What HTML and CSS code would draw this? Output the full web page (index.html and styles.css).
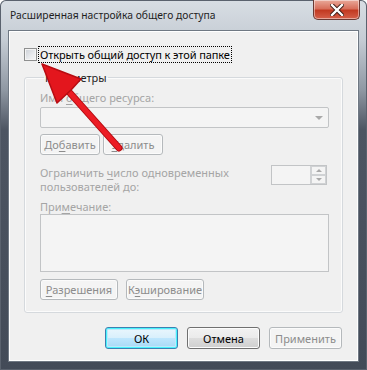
FILE: index.html
```html
<!DOCTYPE html>
<html lang="ru">
<head>
    <meta charset="UTF-8">
    <title>Расширенная настройка общего доступа</title>
    <link rel="stylesheet" href="styles.css">
</head>
<body>
    <div class="window">
        <div class="titlebar">
            <span class="title">Расширенная настройка общего доступа</span>
            <button class="close-btn">
                <svg width="14" height="12" viewBox="0 0 14 12">
                    <path d="M2 1 L12 11 M12 1 L2 11" stroke="#3a1a14" stroke-width="4.2" stroke-linecap="square"/>
                    <path d="M2 1 L12 11 M12 1 L2 11" stroke="#ffffff" stroke-width="2.4" stroke-linecap="square"/>
                </svg>
            </button>
        </div>
        <div class="client">
            <label class="share-row">
                <span class="checkbox"></span>
                <span class="focus-text">Открыть общий доступ к этой папке</span>
            </label>

            <fieldset class="group">
                <legend>Параметры</legend>
                <div class="field-label">Имя <u>о</u>бщего ресурса:</div>
                <div class="combo"><span class="combo-arrow"></span></div>
                <div class="btn-row">
                    <button class="button small" disabled>До<u>б</u>авить</button>
                    <button class="button small" disabled><u>У</u>далить</button>
                </div>
                <div class="limit-row">
                    <div class="field-label two-line">
                        <div>Ограничить <u>ч</u>исло одновременных</div>
                        <div>пользователей до:</div>
                    </div>
                    <div class="spin">
                        <span class="spin-edit"></span>
                        <span class="spin-btns">
                            <span class="spin-up"></span>
                            <span class="spin-down"></span>
                        </span>
                    </div>
                </div>
                <div class="field-label tight">При<u>м</u>ечание:</div>
                <div class="memo"></div>
                <div class="btn-row second">
                    <button class="button wide" disabled><u>Р</u>азрешения</button>
                    <button class="button wide" disabled>К<u>э</u>ширование</button>
                </div>
            </fieldset>

            <div class="dialog-buttons">
                <button class="button dlg default">ОК</button>
                <button class="button dlg normal">Отмена</button>
                <button class="button dlg" disabled>Применить</button>
            </div>
        </div>

        <!-- red pointer drawn over the dialog -->
        <svg class="pointer" width="367" height="370" viewBox="0 0 367 370">
            <path d="M119 148 L70 93" stroke="#b40d12" stroke-width="7" stroke-linecap="round"/>
            <path d="M119 148 L70 93" stroke="#ec1c24" stroke-width="5" stroke-linecap="round"/>
            <path d="M42 64 L81 79 L71 90 L57 103 Z" fill="#e3161d" stroke="#b80c12" stroke-width="1.5" stroke-linejoin="round"/>
        </svg>
    </div>
</body>
</html>
```

FILE: styles.css
```css
body {
    margin: 0;
    padding: 0;
    font-family: "Noto Sans", "Open Sans", sans-serif;
    font-size: 11px;
    color: #000;
    background: #fff;
}
.window {
    position: relative;
    width: 367px;
    height: 370px;
    box-sizing: border-box;
    padding: 0 8px 8px 8px;
    background: linear-gradient(to bottom, #d8dee4 0px, #c5ccd4 40px, #8f98a3 90px, #4d5562 130px, #434b58 370px);
    border-radius: 6px 6px 0 0;
    box-shadow: inset 0 0 0 1px #5a626e;
    overflow: hidden;
}
.titlebar {
    height: 30px;
    display: flex;
    justify-content: space-between;
    align-items: flex-start;
}
.title {
    margin: 7px 0 0 2px;
    color: #1e1e1e;
    font-size: 10.3px;
    line-height: 16px;
}
.close-btn {
    width: 47px;
    height: 20px;
    margin: 0 -1px 0 0;
    padding: 0;
    border: 1px solid #6a3a34;
    border-top: none;
    border-radius: 0 0 5px 5px;
    background: linear-gradient(to bottom, #e9a99a 0%, #d8705c 45%, #c23a22 55%, #d5604a 100%);
    box-shadow: inset 0 0 0 1px rgba(255, 255, 255, 0.45);
    display: flex;
    align-items: center;
    justify-content: center;
}
.client {
    background: #f0f0f0;
    border: 1px solid #6f7883;
    box-shadow: inset 0 0 0 1px #ffffff;
    height: 332px;
    box-sizing: border-box;
    padding: 16px 15px 0 15px;
    display: flex;
    flex-direction: column;
}
.share-row {
    display: flex;
    align-items: center;
    height: 15px;
    gap: 2px;
}
.checkbox {
    width: 11px;
    height: 11px;
    border: 1px solid #8e8f8f;
    background: linear-gradient(135deg, #cbcfd5 0%, #e9ebee 60%, #f6f6f6 100%);
    box-shadow: inset 0 0 0 1px #f4f4f4;
}
.focus-text {
    outline: 1px dotted #000;
    outline-offset: 0;
    padding: 0 1px;
    line-height: 15px;
    white-space: nowrap;
    letter-spacing: -0.1px;
}
.group {
    margin: 8px 0 0 0;
    padding: 6px 13px 12px 15px;
    border: 1px solid #d5d9dd;
    border-radius: 3px;
    box-shadow: inset 0 0 0 1px #fbfbfb;
    min-width: 0;
}
.group legend {
    padding: 0 1px;
    margin-left: 4px;
    line-height: 15px;
    color: #1e1e1e;
}
.field-label {
    color: #a5a5a5;
    line-height: 14px;
    margin-bottom: 2px;
}
.field-label.tight {
    margin-bottom: 0;
}
.field-label u,
.button u {
    text-decoration-thickness: 1px;
    text-underline-offset: 2px;
}
.combo {
    height: 21px;
    box-sizing: border-box;
    border: 1px solid #c2c4c6;
    border-radius: 2px;
    background: #f4f4f4;
    position: relative;
}
.combo-arrow {
    position: absolute;
    right: 5px;
    top: 8px;
    border-left: 4px solid transparent;
    border-right: 4px solid transparent;
    border-top: 4px solid #a9a9a9;
}
.btn-row {
    display: flex;
    gap: 3px;
    margin-top: 6px;
    margin-bottom: 10px;
}
.btn-row.second {
    gap: 8px;
    margin-top: 7px;
    margin-bottom: 0;
}
.button {
    font-family: inherit;
    font-size: 11px;
    height: 21px;
    padding: 0;
    border: 1px solid #b5b9bc;
    border-radius: 3px;
    background: #f4f4f4;
    color: #8c8c8c;
    box-shadow: inset 0 0 0 1px #fbfbfb;
}
.button.small {
    width: 60px;
}
.button.wide {
    width: 78px;
}
.limit-row {
    display: flex;
    justify-content: space-between;
    align-items: flex-start;
    margin-bottom: 4px;
}
.two-line {
    margin-top: 1px;
}
.spin {
    display: flex;
    width: 56px;
    height: 20px;
    box-sizing: border-box;
    border: 1px solid #c2c4c6;
    background: #f4f4f4;
    margin-right: 2px;
}
.spin-edit {
    flex: 1;
}
.spin-btns {
    width: 15px;
    display: flex;
    flex-direction: column;
    border-left: 1px solid #d0d2d4;
}
.spin-up,
.spin-down {
    flex: 1;
    position: relative;
    border: 1px solid #d0d2d4;
}
.spin-up::after,
.spin-down::after {
    content: "";
    position: absolute;
    left: 4px;
    top: 2px;
    border-left: 3px solid transparent;
    border-right: 3px solid transparent;
}
.spin-up::after {
    border-bottom: 3px solid #a9a9a9;
}
.spin-down::after {
    border-top: 3px solid #a9a9a9;
}
.memo {
    height: 58px;
    box-sizing: border-box;
    border: 1px solid #c2c4c6;
    background: #f4f4f4;
}
.dialog-buttons {
    display: flex;
    justify-content: flex-end;
    gap: 9px;
    margin-top: 14px;
    margin-right: 1px;
}
.button.dlg {
    width: 73px;
    height: 22px;
}
.button.normal {
    color: #000;
    border-color: #707070;
    background: linear-gradient(to bottom, #f2f2f2 0%, #ebebeb 48%, #dddddd 52%, #cfcfcf 100%);
    box-shadow: inset 0 0 0 1px #fcfcfc;
}
.button.default {
    color: #000;
    border-color: #3c7fb1;
    background: linear-gradient(to bottom, #eaf6fd 0%, #d9f0fc 48%, #bee6fd 52%, #a7d9f5 100%);
    box-shadow: inset 0 0 0 1px #48f3fc, inset 0 0 0 2px #bde9fb;
}
.pointer {
    position: absolute;
    left: 0;
    top: 0;
    pointer-events: none;
}
```
